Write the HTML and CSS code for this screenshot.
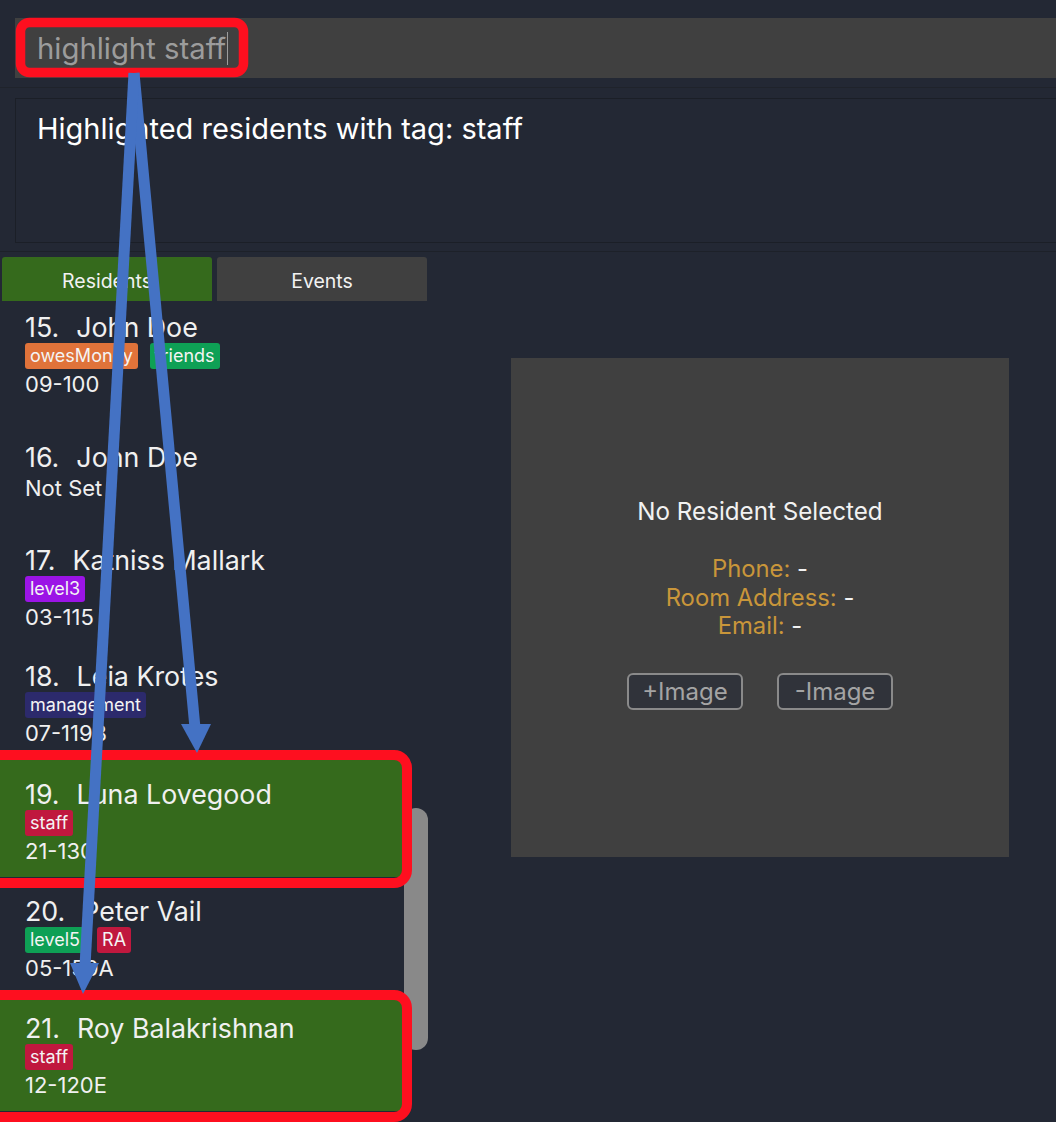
FILE: index.html
```html
<!DOCTYPE html>
<html>
<head>
<meta charset="utf-8">
<link rel="stylesheet" href="styles.css">
</head>
<body>
<div class="app">
  <div class="command"><span class="cmd-text">highlight staff</span><span class="caret"></span></div>
  <div class="sep"></div>
  <div class="result">Highlighted residents with tag: staff</div>
  <div class="divider"></div>
  <div class="main">
    <div class="left">
      <div class="tabs">
        <div class="tab active">Residents</div>
        <div class="tab">Events</div>
      </div>
      <div class="listwrap">
        <div class="list">
          <div class="item first">
            <div class="name"><span class="idx">15.</span>John Doe</div>
            <div class="tags"><span class="tag orange">owesMoney</span><span class="tag green">friends</span></div>
            <div class="addr">09-100</div>
          </div>
          <div class="item short">
            <div class="name"><span class="idx">16.</span>John Doe</div>
            <div class="addr">Not Set</div>
          </div>
          <div class="item h116">
            <div class="name"><span class="idx">17.</span>Katniss Mallark</div>
            <div class="tags"><span class="tag purple">level3</span></div>
            <div class="addr">03-115</div>
          </div>
          <div class="item h118">
            <div class="name"><span class="idx">18.</span>Leia Krotes</div>
            <div class="tags"><span class="tag navy">management</span></div>
            <div class="addr">07-119B</div>
          </div>
          <div class="item hl">
            <div class="name"><span class="idx">19.</span>Luna Lovegood</div>
            <div class="tags"><span class="tag red">staff</span></div>
            <div class="addr">21-130</div>
          </div>
          <div class="item">
            <div class="name"><span class="idx">20.</span>Peter Vail</div>
            <div class="tags"><span class="tag green">level5</span><span class="tag red">RA</span></div>
            <div class="addr">05-150A</div>
          </div>
          <div class="item hl">
            <div class="name"><span class="idx">21.</span>Roy Balakrishnan</div>
            <div class="tags"><span class="tag red">staff</span></div>
            <div class="addr">12-120E</div>
          </div>
        </div>
        <div class="track"><div class="thumb"></div></div>
      </div>
    </div>
    <div class="right">
      <div class="panel">
        <div class="panel-title">No Resident Selected</div>
        <div class="fields">
          <div><span class="label">Phone:</span> -</div>
          <div><span class="label">Room Address:</span> -</div>
          <div><span class="label">Email:</span> -</div>
        </div>
        <div class="buttons">
          <div class="btn">+Image</div>
          <div class="btn">-Image</div>
        </div>
      </div>
    </div>
  </div>
  <svg class="annot" width="1056" height="1122" viewBox="0 0 1056 1122">
    <rect x="20.5" y="22.5" width="223" height="50" rx="9" fill="none" stroke="#fe0f1f" stroke-width="9.5"/>
    <rect x="-12" y="755" width="419" height="128" rx="13" fill="none" stroke="#fe0f1f" stroke-width="10"/>
    <rect x="-12" y="995" width="419" height="122" rx="13" fill="none" stroke="#fe0f1f" stroke-width="10"/>
    <line x1="134" y1="73" x2="195" y2="728" stroke="#4472c4" stroke-width="11"/>
    <polygon points="181,724 211,724 197,753" fill="#4472c4"/>
    <line x1="134" y1="73" x2="85" y2="966" stroke="#4472c4" stroke-width="11"/>
    <polygon points="70,963 99,963 83,994" fill="#4472c4"/>
  </svg>
</div>
</body>
</html>
```
FILE: styles.css
```css
html, body {
  margin: 0;
  padding: 0;
}
body {
  background: #232834;
  font-family: Inter, "Noto Sans", "Liberation Sans", sans-serif;
  color: #f0f0f0;
}
.app {
  position: relative;
  width: 1056px;
  height: 1122px;
  overflow: hidden;
}
.command {
  margin: 18px 0 0 15px;
  height: 60px;
  background: #404040;
  display: flex;
  align-items: center;
  padding-left: 22px;
  font-size: 29.3px;
  color: #9c9c9c;
}
.caret {
  display: inline-block;
  width: 1px;
  height: 33px;
  background: #9c9c9c;
  margin-left: 1px;
}
.sep {
  height: 1px;
  margin-top: 9px;
  background: #1f232b;
}
.result {
  margin: 10px 0 0 15px;
  height: 145px;
  border: 1px solid #1b1f27;
  border-right: none;
  box-sizing: border-box;
  padding: 12px 0 0 21px;
  font-size: 29px;
  line-height: 36px;
  color: #ffffff;
}
.divider {
  height: 1px;
  margin-top: 8px;
  background: #1d2129;
}
.main {
  display: flex;
  margin-top: 5px;
}
.left {
  width: 428px;
  display: flex;
  flex-direction: column;
}
.tabs {
  display: flex;
  gap: 5px;
  padding-left: 2px;
}
.tab {
  width: 210px;
  height: 44px;
  box-sizing: border-box;
  padding-top: 3px;
  background: #404040;
  border-radius: 3px 3px 0 0;
  display: flex;
  align-items: center;
  justify-content: center;
  font-size: 19.5px;
  color: #f2f2f2;
}
.tab.active {
  background: #356a1c;
}
.listwrap {
  display: flex;
  height: 821px;
}
.list {
  width: 404px;
  display: flex;
  flex-direction: column;
}
.item {
  height: 117px;
  flex: none;
  box-sizing: border-box;
  padding: 18px 0 0 25px;
}
.item.first {
  height: 122px;
  padding-top: 10px;
}
.item.short { height: 103px; }
.item.h116 { height: 116px; }
.item.h118 { height: 118px; }
.item.hl {
  background: #356a1c;
  width: 403px;
}
.name {
  font-size: 26.8px;
  line-height: 32px;
  color: #f0f0f0;
}
.idx {
  margin-right: 17px;
}
.tags {
  display: flex;
  gap: 12px;
  height: 26px;
  margin-top: 0;
}
.tag {
  height: 26px;
  line-height: 26px;
  padding: 0 5px;
  border-radius: 3px;
  font-size: 18px;
  color: #f4f4f4;
}
.tag.orange { background: #e0733a; }
.tag.green { background: #0ea055; }
.tag.purple { background: #9b14e6; }
.tag.navy { background: #2c2a6c; }
.tag.red { background: #c0183e; }
.addr {
  font-size: 22px;
  line-height: 31px;
  color: #f0f0f0;
}
.track {
  width: 24px;
  padding-top: 507px;
}
.thumb {
  width: 24px;
  height: 242px;
  background: #898989;
  border-radius: 12px;
}
.right {
  flex: 1;
  padding: 101px 0 0 83px;
}
.panel {
  width: 498px;
  height: 499px;
  background: #404040;
  display: flex;
  flex-direction: column;
  align-items: center;
  padding-top: 138px;
  box-sizing: border-box;
}
.panel-title {
  font-size: 24.2px;
  line-height: 32px;
  color: #f2f2f2;
}
.fields {
  margin-top: 27px;
  font-size: 23.8px;
  line-height: 28.5px;
  text-align: center;
  color: #f2f2f2;
}
.label {
  color: #c9963a;
}
.buttons {
  display: flex;
  gap: 34px;
  margin-top: 32px;
}
.btn {
  width: 116px;
  height: 37px;
  box-sizing: border-box;
  border: 2px solid #8a8a8a;
  border-radius: 6px;
  background: #30333a;
  color: #a4a4a4;
  font-size: 24px;
  display: flex;
  align-items: center;
  justify-content: center;
}
.annot {
  position: absolute;
  left: 0;
  top: 0;
  pointer-events: none;
}
```
